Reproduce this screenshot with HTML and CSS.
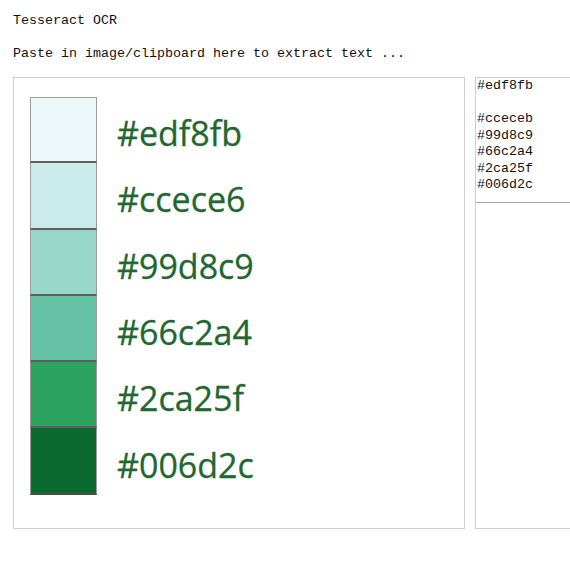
FILE: index.html
```html
<!DOCTYPE html>
<html>
<head>
<meta charset="utf-8">
<title>Tesseract OCR</title>
<link rel="stylesheet" href="styles.css">
</head>
<body>
<div class="title">Tesseract OCR</div>
<p class="hint">Paste in image/clipboard here to extract text ...</p>
<div class="panes">
  <div class="image-pane">
    <div class="legend">
      <div class="row"><div class="sw first" style="background:#edf8fb"></div><span class="lbl">#edf8fb</span></div>
      <div class="row"><div class="sw" style="background:#cceceb"></div><span class="lbl">#ccece6</span></div>
      <div class="row"><div class="sw" style="background:#99d8c9"></div><span class="lbl">#99d8c9</span></div>
      <div class="row"><div class="sw" style="background:#66c2a4"></div><span class="lbl">#66c2a4</span></div>
      <div class="row"><div class="sw" style="background:#2ca25f"></div><span class="lbl">#2ca25f</span></div>
      <div class="row"><div class="sw last" style="background:#0b6b2e"></div><span class="lbl">#006d2c</span></div>
    </div>
  </div>
  <div class="text-pane">
    <pre class="output">#edf8fb

#cceceb
#99d8c9
#66c2a4
#2ca25f
#006d2c</pre>
  </div>
</div>
</body>
</html>
```
FILE: styles.css
```css
html, body {
  overflow: hidden;
}
body {
  margin: 0;
  padding: 13px 0 0 13px;
  font-family: "Liberation Mono", monospace;
  font-size: 13.33px;
  line-height: 16px;
  color: #111;
  background: #fff;
  width: 700px;
}
.title {
  margin: 0;
}
.hint {
  margin: 17px 0 15px 0;
}
.panes {
  display: flex;
  gap: 10px;
  align-items: flex-start;
}
.image-pane {
  width: 450px;
  height: 450px;
  border: 1px solid #cfcfcf;
}
.legend {
  margin: 19px 0 0 16px;
  display: flex;
  flex-direction: column;
}
.row {
  display: flex;
  align-items: center;
  height: 66.3px;
}
.sw {
  width: 67px;
  height: 100%;
  box-sizing: border-box;
  border-left: 1px solid #9c9c9c;
  border-right: 1px solid #9c9c9c;
  border-bottom: 2px solid #5e5e5e;
}
.sw.first {
  border-top: 1px solid #9c9c9c;
}
.sw.last {
  border-bottom: 2px solid #4d4d4d;
}
.lbl {
  margin-left: 20px;
  font-family: "Open Sans", "Noto Sans", sans-serif;
  font-size: 34px;
  color: #22672f;
  line-height: 40px;
  position: relative;
  top: 3px;
  -webkit-text-stroke: 0.3px #22672f;
}
.text-pane {
  width: 200px;
  height: 450px;
  border: 1px solid #cfcfcf;
}
.output {
  margin: 0;
  padding: 0 0 8px 1px;
  font-family: "Liberation Mono", monospace;
  font-size: 13.33px;
  line-height: 16.5px;
  color: #111;
  border-bottom: 1px solid #a9a9a9;
}
```
